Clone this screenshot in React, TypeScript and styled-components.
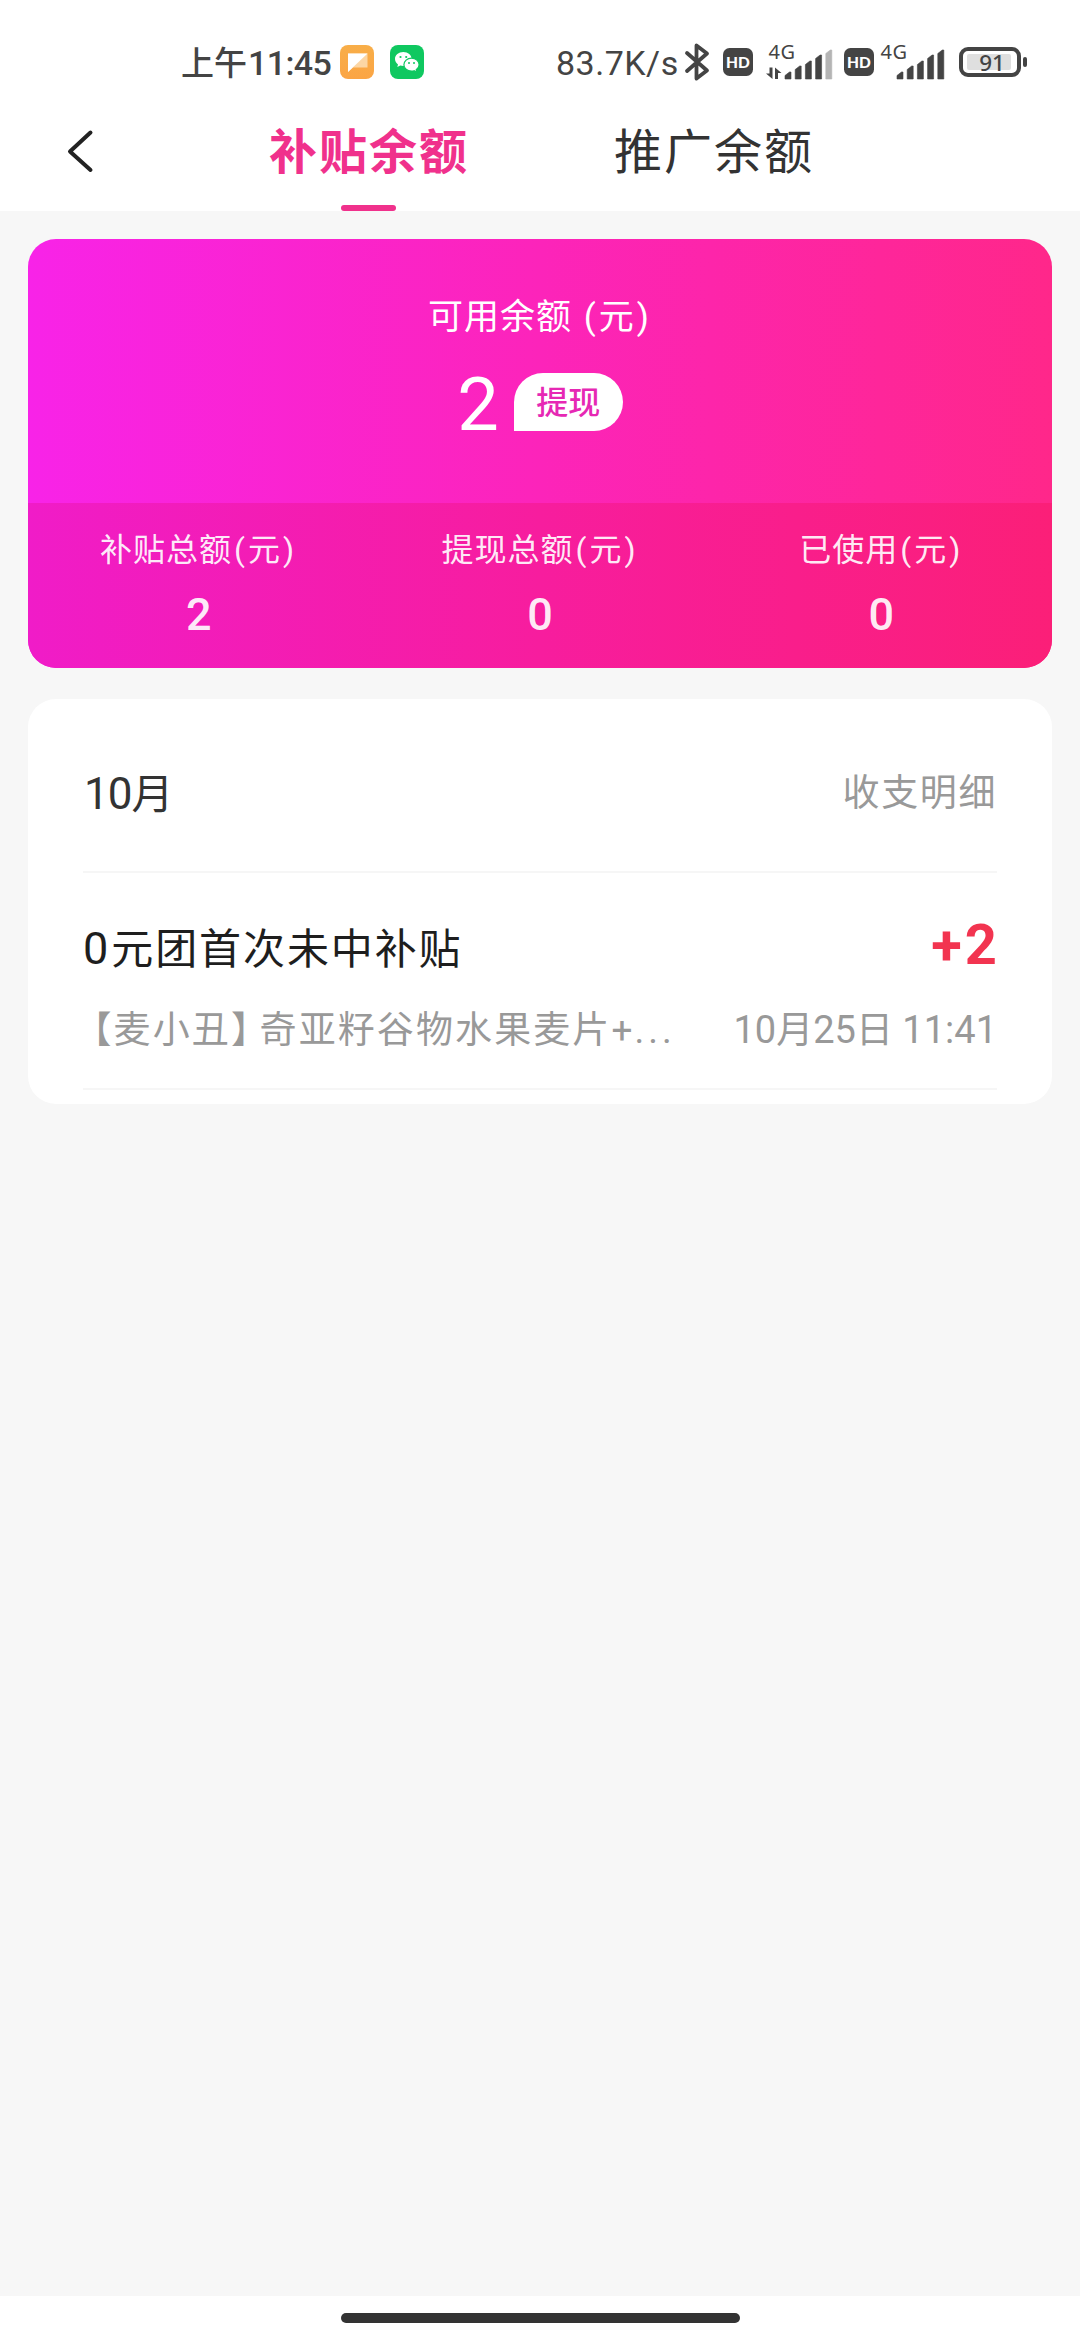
import React from "react";
import styled, { createGlobalStyle } from "styled-components";

const GlobalStyle = createGlobalStyle`
  html, body { margin: 0; padding: 0; }
  *, *::before, *::after { box-sizing: border-box; }
  body {
    background: #f7f7f7;
    font-family: Roboto, "Noto Sans CJK SC", sans-serif;
    color: #333;
  }
`;

const Page = styled.div`
  display: flex;
  flex-direction: column;
  width: 1080px;
  height: 2340px;
  background: #f7f7f7;
  overflow: hidden;
`;

const Header = styled.header`
  height: 211px;
  background: #fff;
  flex: none;
`;

const StatusBar = styled.div`
  display: flex;
  align-items: center;
  justify-content: space-between;
  height: 92px;
  padding: 32px 52px 0 181px;
  color: #444;
`;

const StatusGroup = styled.div`
  display: flex;
  align-items: center;
  height: 60px;
`;

const Clock = styled.div`
  display: flex;
  align-items: baseline;
  width: 159px;
  padding-top: 3px;
  font-size: 33px;
  line-height: 60px;
  font-weight: 500;
  white-space: nowrap;
`;

const ClockDigits = styled.span`
  font-size: 34px;
  letter-spacing: -0.6px;
  margin-left: 1px;
`;

const Speed = styled.div`
  width: 129px;
  padding-top: 1px;
  font-size: 34px;
  line-height: 60px;
  letter-spacing: 0.5px;
  white-space: nowrap;
`;

const Glyph = styled.svg<{ $gap?: number }>`
  display: block;
  flex: none;
  margin-left: ${(p) => p.$gap ?? 0}px;
  overflow: visible;
`;

const NavBar = styled.nav`
  display: flex;
  height: 119px;
  padding-left: 60px;
`;

const BackButton = styled.button`
  display: flex;
  align-items: center;
  width: 150px;
  height: 118px;
  padding: 0 0 0 6px;
  border: 0;
  background: none;
`;

const Tab = styled.div<{ $active?: boolean }>`
  display: flex;
  flex-direction: column;
  align-items: center;
  justify-content: space-between;
  width: 316px;
  margin-right: 29px;
  font-size: 48px;
  line-height: 113px;
  letter-spacing: 2px;
  font-weight: ${(p) => (p.$active ? 700 : 400)};
  color: ${(p) => (p.$active ? "#f0318c" : "#333")};
`;

const TabLabel = styled.span`
  height: 113px;
  padding: 4px 0 0 2px;
`;

const TabMark = styled.span`
  width: 55px;
  height: 6px;
  border-radius: 3px;
  background: #f0318c;
`;

const Content = styled.main`
  flex: 1;
  display: flex;
  flex-direction: column;
  gap: 31px;
  padding: 28px 28px 0;
`;

const BalanceCard = styled.section`
  height: 429px;
  border-radius: 28px;
  overflow: hidden;
  background: linear-gradient(90deg, #f823e8 0%, #fc24ba 50%, #ff278a 100%);
  color: #fff;
`;

const Available = styled.div`
  display: flex;
  flex-direction: column;
  align-items: center;
  height: 264px;
  padding-top: 53px;
`;

const AvailableLabel = styled.div`
  height: 52px;
  font-size: 35px;
  line-height: 52px;
  letter-spacing: 1px;
  white-space: pre;
`;

const Paren = styled.span`
  margin: 0 2px;
`;

const AmountRow = styled.div`
  display: flex;
  align-items: center;
  gap: 15px;
  margin-top: 29px;
  height: 58px;
`;

const Amount = styled.span`
  height: 58px;
  padding-top: 3px;
  font-size: 74px;
  line-height: 58px;
`;

const Withdraw = styled.button`
  width: 109px;
  height: 58px;
  padding: 2px 0 0;
  border: 0;
  border-radius: 29px 29px 29px 0;
  background: #fff;
  color: #e628b4;
  font: 500 32px/56px Roboto, "Noto Sans CJK SC", sans-serif;
`;

const Stats = styled.div`
  display: grid;
  grid-template-columns: repeat(3, 1fr);
  height: 165px;
  padding-top: 23px;
  background: linear-gradient(90deg, #f01cc8 0%, #f71d9e 50%, #fb1f78 100%);
`;

const Stat = styled.div`
  display: flex;
  flex-direction: column;
  align-items: center;
  color: rgba(255, 255, 255, 0.92);
`;

const StatLabel = styled.span`
  height: 48px;
  font-size: 32px;
  line-height: 48px;
  letter-spacing: 1px;
`;

const StatValue = styled.span`
  margin-top: 13px;
  height: 56px;
  font-size: 45px;
  line-height: 56px;
  font-weight: 500;
`;

const Records = styled.section`
  height: 405px;
  padding: 0 55px;
  border-radius: 28px;
  background: #fff;
`;

const MonthRow = styled.div`
  display: flex;
  justify-content: space-between;
  height: 174px;
  border-bottom: 2px solid #f6f6f6;
  line-height: 190px;
`;

const Month = styled.span`
  padding-left: 1px;
  font-size: 42px;
`;

const Detail = styled.span`
  font-size: 37px;
  letter-spacing: 1.6px;
  color: #999;
`;

const Digits = styled.span<{ $size: number; $space?: number; $after?: number }>`
  font-size: ${(p) => p.$size}px;
  letter-spacing: ${(p) => p.$space ?? 0}px;
  margin-right: ${(p) => p.$after ?? 0}px;
`;

const Entry = styled.div`
  height: 217px;
  padding-top: 40px;
  border-bottom: 2px solid #f6f6f6;
`;

const EntryTop = styled.div`
  display: flex;
  justify-content: space-between;
  height: 72px;
`;

const EntryTitle = styled.span`
  font-size: 42px;
  line-height: 72px;
  letter-spacing: 1.9px;
  color: #1e1e1e;
`;

const EntryAmount = styled.span`
  font-size: 56px;
  line-height: 64px;
  font-weight: 700;
  color: #f23450;
`;

const Sign = styled.span`
  margin-right: 3px;
`;

const EntryBottom = styled.div`
  display: flex;
  justify-content: space-between;
  height: 64px;
  margin-top: 13px;
  font-size: 37px;
  line-height: 64px;
  color: #999;
`;

const EntryDesc = styled.span`
  padding-top: 1px;
  letter-spacing: 2.1px;
  white-space: nowrap;
`;

const Bracket = styled.span<{ $before: number; $after: number }>`
  font-family: "Noto Sans CJK SC", sans-serif;
  font-feature-settings: "halt";
  line-height: 1;
  margin: 0 ${(p) => p.$after}px 0 ${(p) => p.$before}px;
`;

const EntryDate = styled.span`
  white-space: nowrap;
`;

const GestureBar = styled.footer`
  display: flex;
  justify-content: center;
  height: 44px;
  padding-top: 17px;
  background: #fff;
`;

const GesturePill = styled.span`
  width: 399px;
  height: 10px;
  border-radius: 5px;
  background: #333;
`;

const NoteIcon = () => (
  <Glyph width="34" height="34" viewBox="0 0 34 34">
    <defs>
      <linearGradient id="note" x1="0" y1="0" x2="0" y2="1">
        <stop offset="0" stopColor="#f8ae48" />
        <stop offset="1" stopColor="#fba545" />
      </linearGradient>
    </defs>
    <rect width="34" height="34" rx="8" fill="url(#note)" />
    <path d="M8 8.5H27.5V22.5H13L8 27Z" fill="#fcd6a4" />
    <path d="M8 8.5H27.5L8 27Z" fill="#fff" />
  </Glyph>
);

const WeChatIcon = () => (
  <Glyph $gap={16} width="34" height="34" viewBox="0 0 34 34">
    <rect width="34" height="34" rx="8" fill="#0fc860" />
    <path
      d="M13.3 7C8.6 7 5 10.1 5 14c0 2.2 1.2 4.1 3 5.4L7.3 22l3-1.600c1 .3 2 .5 3 .5 4.700 0 8.300-3.100 8.300-6.900S18 7 13.300 7Z"
      fill="#fff"
    />
    <path
      d="M21.500 13.200c-4.300 0-7.600 2.900-7.600 6.500s3.300 6.400 7.600 6.400c.9 0 1.800-.1 2.600-.4l2.800 1.500-.7-2.500c1.800-1.200 2.900-3 2.900-5 0-3.600-3.300-6.500-7.600-6.500Z"
      fill="#fff"
      stroke="#0fc860"
      strokeWidth="1.2"
    />
    <g fill="#0fc860">
      <circle cx="10.5" cy="12" r="1.1" />
      <circle cx="16.2" cy="12" r="1.1" />
      <circle cx="19" cy="18" r="1" />
      <circle cx="24" cy="18" r="1" />
    </g>
  </Glyph>
);

const BluetoothIcon = () => (
  <Glyph width="24" height="38" viewBox="0 0 24 38">
    <path
      d="M2 10L22 27.500L11.500 35.500V2.500L22 10.500L2 28"
      fill="none"
      stroke="#444"
      strokeWidth="3.8"
      strokeLinejoin="round"
      strokeLinecap="round"
    />
  </Glyph>
);

const HdIcon = ({ gap }: { gap: number }) => (
  <Glyph $gap={gap} width="30" height="28" viewBox="0 0 30 28">
    <rect width="30" height="28" rx="6.5" fill="#444" />
    <text x="15" y="19.5" textAnchor="middle" fontFamily="Lato, sans-serif" fontWeight="900" fontSize="15.5" fill="#fff">
      HD
    </text>
  </Glyph>
);

const barHeights = [7, 13, 18, 24, 29];

const SignalIcon = ({ gap, arrows, level, start }: { gap: number; arrows?: boolean; level: number; start: number }) => (
  <Glyph $gap={gap} width={start + 47} height="34" viewBox={`0 0 ${start + 47} 34`}>
    <text x={arrows ? 2.5 : -0.5} y="13.5" fontFamily='"Noto Sans", sans-serif' fontSize="20" letterSpacing="0.5" fill="#444">
      4G
    </text>
    {arrows && (
      <g fill="#444">
        <path d="M3.500 22.500H6.500V34L0 28.500H3.500Z" />
        <path d="M9 22.500L15.500 28H12V34H9Z" />
      </g>
    )}
    {barHeights.map((h, i) => (
      <path
        key={h}
        d={`M${start + i * 10.2} ${34 - h + 3.5}L${start + i * 10.2 + 4.5} ${34 - h}H${start + i * 10.2 + 6}V34H${start + i * 10.2}Z`}
        fill={i < level ? "#444" : "#b4b4b4"}
        stroke={i < level ? "#444" : "#b4b4b4"}
        strokeWidth="0.6"
        strokeLinejoin="round"
      />
    ))}
  </Glyph>
);

const BatteryIcon = () => (
  <Glyph $gap={15} width="69" height="30" viewBox="0 0 69 30">
    <rect x="2" y="2" width="58" height="26" rx="7" fill="#fff" stroke="#444" strokeWidth="4" />
    <rect x="8" y="7" width="44" height="16" rx="2" fill="#dfdfdf" />
    <rect x="64" y="10" width="4" height="10" rx="2" fill="#444" />
    <text x="33" y="23.5" textAnchor="middle" fontFamily='"Noto Sans", sans-serif' fontWeight="500" fontSize="22.5" fill="#444">
      91
    </text>
  </Glyph>
);

const Unit = () => (
  <>
    <Paren>(</Paren>元<Paren>)</Paren>
  </>
);

const stats = [
  { label: "补贴总额", value: 2 },
  { label: "提现总额", value: 0 },
  { label: "已使用", value: 0 },
];

export default function App() {
  return (
    <Page>
      <GlobalStyle />
      <Header>
        <StatusBar>
          <StatusGroup>
            <Clock>
              上午<ClockDigits>11:45</ClockDigits>
            </Clock>
            <NoteIcon />
            <WeChatIcon />
          </StatusGroup>
          <StatusGroup>
            <Speed>83.7K/s</Speed>
            <BluetoothIcon />
            <HdIcon gap={14} />
            <SignalIcon gap={13} arrows level={4} start={19} />
            <HdIcon gap={12} />
            <SignalIcon gap={7} level={5} start={16} />
            <BatteryIcon />
          </StatusGroup>
        </StatusBar>
        <NavBar>
          <BackButton aria-label="返回">
            <Glyph width="27" height="44" viewBox="0 0 27 44">
              <path d="M24.500 3.500L4 22.500L24.500 41" fill="none" stroke="#222" strokeWidth="4" strokeLinecap="round" strokeLinejoin="round" />
            </Glyph>
          </BackButton>
          <Tab $active>
            <TabLabel>补贴余额</TabLabel>
            <TabMark />
          </Tab>
          <Tab>
            <TabLabel>推广余额</TabLabel>
          </Tab>
        </NavBar>
      </Header>
      <Content>
        <BalanceCard>
          <Available>
            <AvailableLabel>
              可用余额 <Unit />
            </AvailableLabel>
            <AmountRow>
              <Amount>2</Amount>
              <Withdraw>提现</Withdraw>
            </AmountRow>
          </Available>
          <Stats>
            {stats.map((s) => (
              <Stat key={s.label}>
                <StatLabel>
                  {s.label}
                  <Unit />
                </StatLabel>
                <StatValue>{s.value}</StatValue>
              </Stat>
            ))}
          </Stats>
        </BalanceCard>
        <Records>
          <MonthRow>
            <Month>
              <Digits $size={44} $space={-1}>10</Digits>月
            </Month>
            <Detail>收支明细</Detail>
          </MonthRow>
          <Entry>
            <EntryTop>
              <EntryTitle>
                <Digits $size={45} $after={3}>0</Digits>元团首次未中补贴
              </EntryTitle>
              <EntryAmount>
                <Sign>+</Sign>2
              </EntryAmount>
            </EntryTop>
            <EntryBottom>
              <EntryDesc>
                <Bracket $before={10} $after={0}>【</Bracket>麦小丑<Bracket $before={0} $after={8}>】</Bracket>
                奇亚籽谷物水果麦片+<Digits $size={37} $space={4}>...</Digits>
              </EntryDesc>
              <EntryDate>
                <Digits $size={38}>10</Digits>月<Digits $size={38}>25</Digits>日<Digits $size={38}> 11:41</Digits>
              </EntryDate>
            </EntryBottom>
          </Entry>
        </Records>
      </Content>
      <GestureBar>
        <GesturePill />
      </GestureBar>
    </Page>
  );
}
